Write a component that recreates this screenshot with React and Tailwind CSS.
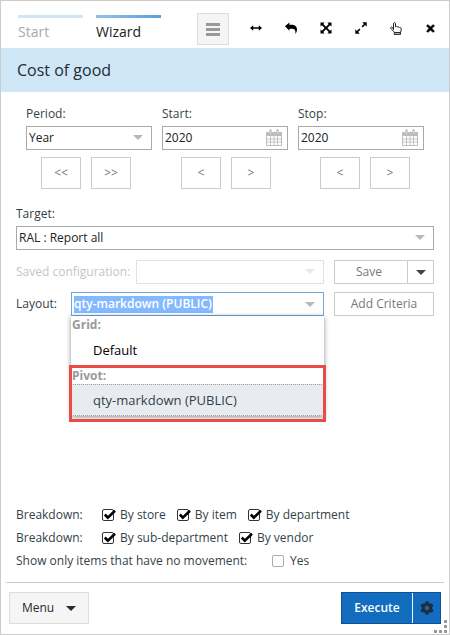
import React from "react";
import { FaCog, FaTimes } from "react-icons/fa";

function Caret({ className = "" }) {
  return (
    <svg viewBox="0 0 10 5" className={`pointer-events-none h-[5px] w-[10px] fill-current ${className}`} aria-hidden="true">
      <path d="M0 0h10L5 5z" />
    </svg>
  );
}

function CalendarIcon() {
  return (
    <svg viewBox="0 0 16 17" className="h-[17px] w-4" fill="none" stroke="#bdbdbd" aria-hidden="true">
      <path d="M.5 3.5h15v13H.5z" />
      <path d="M.5 3.5h15v3H.5z" fill="#bdbdbd" />
      <path d="M4.5 7v9M8 7v9M11.5 7v9M1 10h14M1 13h14" strokeWidth="0.9" />
      <path d="M4.5 1.5v3M11.5 1.5v3" strokeWidth="2.6" strokeLinecap="round" />
      <path d="M4.5 2v2.5M11.5 2v2.5" stroke="#eee" strokeWidth="0.8" />
    </svg>
  );
}

function LeftRightIcon() {
  return (
    <svg viewBox="0 0 12 12" className="size-3" aria-hidden="true">
      <path d="M0 6l3.2-2.8v2.1h5.6V3.2L12 6 8.8 8.8V6.7H3.2v2.1z" />
    </svg>
  );
}

function BackIcon() {
  return (
    <svg viewBox="0 0 12 12" className="size-3" aria-hidden="true">
      <path d="M0 4.3L4.4.5v2.3h1.8c3.9 0 5.8 1.7 5.8 4.9 0 1.1-.4 2.5-1.2 3.8-.2.3-.5.2-.4-.2.4-3.3-.8-4.6-4.2-4.6H4.4v2z" />
    </svg>
  );
}

function ArrowsOutIcon() {
  return (
    <svg viewBox="0 0 12 12" className="size-3" aria-hidden="true">
      <path d="M.5.5h4L3.3 1.9 6 4.7l2.7-2.8L7.5.5h4v4l-1.4-1.3L7.3 6l2.8 2.8 1.4-1.3v4h-4l1.2-1.4L6 7.3l-2.7 2.8 1.2 1.4h-4v-4l1.4 1.3L4.7 6 1.9 3.2.5 4.5z" />
    </svg>
  );
}

function ExpandIcon() {
  return (
    <svg viewBox="0 0 12 12" className="size-3" aria-hidden="true">
      <path d="M7.3.3h4.4v4.4l-1.6-1.6-2.3 2.3-1.2-1.2 2.3-2.3zM.3 7.3l1.6 1.6 2.3-2.3 1.2 1.2-2.3 2.3 1.6 1.6H.3z" />
    </svg>
  );
}

function HandIcon() {
  return (
    <svg viewBox="0 0 12 13" className="h-[13px] w-3" fill="none" stroke="#222" strokeLinejoin="round" aria-hidden="true">
      <path d="M3.5 7.5V1.7c0-1.5 2-1.5 2 0v3l1-.3 1.2.6 1.3-.1.7.7c1.1-.1 1.6.3 1.6 1.4 0 1.6-.8 2.2-.8 3.6H4.7C4.1 9 1.8 8.3.8 6.4c-.5-1.1.7-1.7 1.5-1.1z" />
      <path d="M4.2 10.7h6.3v1.7H4.2z" />
    </svg>
  );
}

function Tool({ label, children }) {
  return (
    <button type="button" aria-label={label} className="flex h-6 w-[35px] items-center justify-center text-black">
      {children}
    </button>
  );
}

function StepButton({ label, children }) {
  return (
    <button type="button" aria-label={label} className="h-8 w-10 border border-[#ccc] font-medium text-[#777]">
      {children}
    </button>
  );
}

function PeriodField({ id, label, children, steps, shift = "" }) {
  return (
    <div className="min-w-0 flex-1">
      <label htmlFor={id} className="block h-5 leading-4">
        {label}
      </label>
      {children}
      <div className={`mt-[7px] flex justify-center gap-[10px] ${shift}`}>
        {steps.map((s, i) => (
          <StepButton key={s} label={`${label} ${i ? "next" : "previous"}`}>
            {s}
          </StepButton>
        ))}
      </div>
    </div>
  );
}

function SelectBox({ id, options, disabled = false }) {
  return (
    <div className="relative min-w-0 flex-1">
      <select
        id={id}
        disabled={disabled}
        className="block h-6 w-full appearance-none border border-[#aaa] bg-white pl-[2px] font-medium text-[#222] opacity-100 disabled:border-[#e2e2e2]"
      >
        {options.map((o) => (
          <option key={o}>{o}</option>
        ))}
      </select>
      <Caret className={`absolute top-[9px] right-[9px] ${disabled ? "text-[#e8e8e8]" : "text-[#b8b8b8]"}`} />
    </div>
  );
}

function DateBox({ id, value }) {
  return (
    <div className="flex h-6 items-center border border-[#aaa]">
      <input id={id} defaultValue={value} className="min-w-0 flex-1 pl-[2px] font-medium text-[#222] outline-none" />
      <button type="button" aria-label="Open calendar" className="mr-[5px] mb-[2px]">
        <CalendarIcon />
      </button>
    </div>
  );
}

function Check({ label, checked = false }) {
  return (
    <label className="flex items-center gap-1">
      <span className="relative flex w-[14px]">
        <input
          type="checkbox"
          defaultChecked={checked}
          className="peer size-3 appearance-none rounded-xs border border-[#aaa] bg-white checked:border-[#333]"
        />
        <svg
          viewBox="0 0 14 12"
          className="pointer-events-none absolute top-0 left-0 hidden h-3 w-[14px] peer-checked:block"
          fill="none"
          stroke="#000"
          strokeWidth="2.6"
          aria-hidden="true"
        >
          <path d="M2.8 5.5l3 3.2L13 1.8" />
        </svg>
      </span>
      {label}
    </label>
  );
}

function Breakdown({ items }) {
  return (
    <div role="group" aria-label="Breakdown" className="flex h-[23px] items-center">
      <span className="w-[86px]">Breakdown:</span>
      <div className="flex gap-[11px]">
        {items.map((i) => (
          <Check key={i} label={i} checked />
        ))}
      </div>
    </div>
  );
}

function LayoutPicker() {
  return (
    <div className="relative min-w-0 flex-1">
      <div className="flex h-6 items-center border border-[#6fa8dc] bg-white px-[2px]">
        <input
          id="layout"
          role="combobox"
          aria-expanded="true"
          aria-controls="layout-list"
          defaultValue="qty-markdown (PUBLIC)"
          className="field-sizing-content h-[17px] bg-[#84b9ff] pr-px font-semibold text-white outline-none"
        />
        <Caret className="mr-[6px] ml-auto text-[#b8b8b8]" />
      </div>
      <div
        id="layout-list"
        role="listbox"
        aria-label="Layout"
        className="absolute inset-x-0 top-full z-10 bg-white text-[13px] text-black shadow-[0_1px_5px_rgba(0,0,0,0.45)]"
      >
        <div role="group" aria-labelledby="grp-grid">
          <div id="grp-grid" className="h-[18px] pl-px text-xs leading-[18px] font-bold text-[#999]">
            Grid:
          </div>
          <div role="option" aria-selected="false" className="h-8 pl-[22px] leading-8">
            Default
          </div>
        </div>
        <div role="group" aria-labelledby="grp-pivot" className="relative">
          <div id="grp-pivot" className="h-[18px] pl-px text-xs leading-5 font-bold text-[#999]">
            Pivot:
          </div>
          <div
            role="option"
            aria-selected="true"
            className="flex h-8 items-center border border-dotted border-[#999] bg-[#e8ecf1] pl-[21px] text-[#333f48]"
          >
            qty-markdown (PUBLIC)
          </div>
          <div className="pointer-events-none absolute -inset-x-[2px] -top-px -bottom-[6px] border-3 border-[#e84c47]" />
        </div>
      </div>
    </div>
  );
}

export default function App() {
  return (
    <main className="relative flex min-h-screen flex-col border border-[#ccc] bg-white font-['Open_Sans','Noto_Sans',sans-serif] text-xs leading-[18px] text-[#333f48]">
      <header className="flex h-[47px] items-start pr-px pl-[17px]">
        <nav className="mt-[14px] flex gap-[13px] text-sm leading-6">
          <a href="#start" className="w-[65px] text-[#a5abb0]">
            <span className="mb-[2px] block h-[3px] bg-[#cfe6f7]" />
            Start
          </a>
          <a href="#wizard" aria-current="step" className="w-[65px] font-medium text-[#222]">
            <span className="mb-[2px] block h-[3px] bg-linear-to-r from-[#92c1ea] to-[#5b9fdd]" />
            Wizard
          </a>
        </nav>
        <button
          type="button"
          aria-label="Menu"
          className="mt-3 ml-9 flex size-8 flex-col items-center justify-center gap-[2px] border border-[#ddd] bg-[#f5f5f5]"
        >
          <span className="h-[3px] w-[14px] bg-[#999]" />
          <span className="h-[3px] w-[14px] bg-[#999]" />
          <span className="h-[3px] w-[14px] bg-[#999]" />
        </button>
        <div className="mt-[15px] ml-auto flex">
          <Tool label="Resize width"><LeftRightIcon /></Tool>
          <Tool label="Back"><BackIcon /></Tool>
          <Tool label="Full size"><ArrowsOutIcon /></Tool>
          <Tool label="Expand"><ExpandIcon /></Tool>
          <Tool label="Select"><HandIcon /></Tool>
          <Tool label="Close"><FaTimes className="size-[11px]" stroke="#000" strokeWidth="30" /></Tool>
        </div>
      </header>

      <h1 className="h-11 bg-[#cfe6f7] pl-4 text-base leading-11 font-medium text-[#222c33]">Cost of good</h1>

      <form className="flex flex-1 flex-col px-[15px]" onSubmit={(e) => e.preventDefault()}>
        <div className="mt-[14px] flex gap-[10px] px-[10px]">
          <PeriodField id="period" label="Period:" steps={["<<", ">>"]} shift="pr-[6px]">
            <SelectBox id="period" options={["Year"]} />
          </PeriodField>
          <PeriodField id="start" label="Start:" steps={["<", ">"]} shift="pl-[2px]">
            <DateBox id="start" value="2020" />
          </PeriodField>
          <PeriodField id="stop" label="Stop:" steps={["<", ">"]} shift="pl-2">
            <DateBox id="stop" value="2020" />
          </PeriodField>
        </div>

        <label htmlFor="target" className="mt-4 mb-[3px]">
          Target:
        </label>
        <div className="flex">
          <SelectBox id="target" options={["RAL : Report all"]} />
        </div>

        <div className="mt-[10px] flex items-center">
          <label htmlFor="saved" className="w-[120px] text-[#c3c6c9]">
            Saved configuration:
          </label>
          <SelectBox id="saved" options={[""]} disabled />
          <div className="ml-[10px] flex h-6 w-[100px] border border-[#ccc]">
            <button type="button" className="flex-1 pr-1 font-medium text-[#777]">Save</button>
            <button type="button" aria-label="More save options" className="flex w-[26px] items-center justify-center border-l border-[#ccc] text-[#444]">
              <Caret />
            </button>
          </div>
        </div>

        <div className="mt-2 flex items-center">
          <label htmlFor="layout" className="w-[55px]">
            Layout:
          </label>
          <LayoutPicker />
          <button type="button" className="ml-[10px] h-6 w-[100px] border border-[#ccc] font-medium text-[#777]">
            Add Criteria
          </button>
        </div>

        <div className="mt-auto pt-[130px] pb-[10px]">
          <Breakdown items={["By store", "By item", "By department"]} />
          <Breakdown items={["By sub-department", "By vendor"]} />
          <div role="group" aria-label="Show only items that have no movement" className="flex h-[23px] items-center">
            <span className="w-64">Show only items that have no movement:</span>
            <Check label="Yes" />
          </div>
        </div>
      </form>

      <footer className="mx-[5px] flex justify-between border-t border-[#ccc] px-[3px] pt-[9px] pb-[10px]">
        <button type="button" className="flex h-8 w-20 items-center justify-center gap-3 border border-[#ddd] bg-[#f5f5f5] font-medium text-[#222c33]">
          Menu
          <Caret />
        </button>
        <div className="flex h-8 w-[100px] border border-[#0e5293] bg-[#126cbf]">
          <button type="button" className="flex-1 font-semibold text-white">Execute</button>
          <button type="button" aria-label="Settings" className="flex w-7 items-center justify-center border-l border-white text-[#222c33]">
            <FaCog className="size-[14px]" />
          </button>
        </div>
      </footer>

      <svg viewBox="0 0 13 13" className="absolute right-[2px] bottom-px size-[13px]" fill="#999" aria-hidden="true">
        <path d="M10 0h3v3h-3zM10 5h3v3h-3zM10 10h3v3h-3zM5 10h3v3H5zM0 10h3v3H0z" />
      </svg>
    </main>
  );
}
